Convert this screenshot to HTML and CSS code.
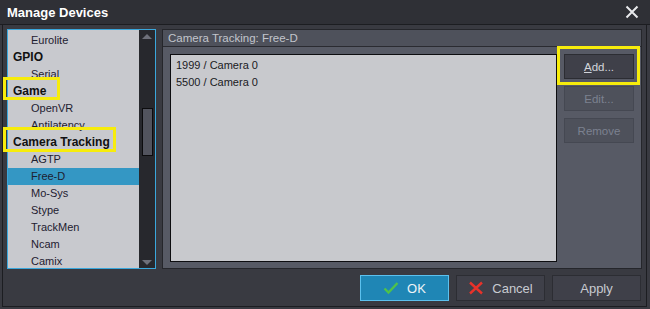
FILE: index.html
```html
<!DOCTYPE html>
<html lang="en">
<head>
    <meta charset="UTF-8">
    <title>Manage Devices</title>
    <link rel="stylesheet" href="styles.css">
</head>
<body>
    <div class="window">
        <div class="titlebar">
            <span class="title">Manage Devices</span>
            <svg class="close" width="14" height="14" viewBox="0 0 14 14">
                <path d="M1.5 1.5 L12.5 12.5 M12.5 1.5 L1.5 12.5" stroke="#e8e9ec" stroke-width="2"/>
            </svg>
        </div>

        <div class="content">
            <div class="main">
                <div class="devices">
                    <ul class="tree">
                        <li class="item">Eurolite</li>
                        <li class="group">GPIO</li>
                        <li class="item">Serial</li>
                        <li class="group">Game</li>
                        <li class="item">OpenVR</li>
                        <li class="item">Antilatency</li>
                        <li class="group">Camera Tracking</li>
                        <li class="item">AGTP</li>
                        <li class="item selected">Free-D</li>
                        <li class="item">Mo-Sys</li>
                        <li class="item">Stype</li>
                        <li class="item">TrackMen</li>
                        <li class="item">Ncam</li>
                        <li class="item">Camix</li>
                    </ul>
                    <div class="scrollbar">
                        <span class="arrow up"></span>
                        <div class="track"><div class="thumb"></div></div>
                        <span class="arrow down"></span>
                    </div>
                </div>

                <div class="panel">
                    <div class="panel-header">Camera Tracking: Free-D</div>
                    <div class="panel-body">
                        <ul class="entries">
                            <li>1999 / Camera 0</li>
                            <li>5500 / Camera 0</li>
                        </ul>
                        <div class="side-buttons">
                            <button class="btn"><span><u>A</u>dd...</span></button>
                            <button class="btn" disabled>Edit...</button>
                            <button class="btn" disabled>Remove</button>
                        </div>
                    </div>
                </div>
            </div>

            <div class="footer">
                <button class="btn big primary">
                    <svg width="16" height="14" viewBox="0 0 16 14">
                        <path d="M1.5 7.5 L5.5 11.5 L14.5 2" fill="none" stroke="#4fc24a" stroke-width="2.4"/>
                    </svg>
                    <span>OK</span>
                </button>
                <button class="btn big">
                    <svg width="16" height="14" viewBox="0 0 16 14">
                        <path d="M2 1.5 L14 12.5 M14 1.5 L2 12.5" stroke="#e8322a" stroke-width="2.4"/>
                    </svg>
                    <span>Cancel</span>
                </button>
                <button class="btn big">Apply</button>
            </div>
        </div>

        <!-- annotation boxes -->
        <div class="mark mark-game"></div>
        <div class="mark mark-tracking"></div>
        <div class="mark mark-add"></div>
    </div>
</body>
</html>
```

FILE: styles.css
```css
* {
    margin: 0;
    padding: 0;
    box-sizing: border-box;
}

body {
    background: #393a41;
    font-family: 'Liberation Sans', Arial, sans-serif;
    font-size: 11px;
    width: 650px;
    height: 309px;
    overflow: hidden;
}

.window {
    position: relative;
    width: 650px;
    height: 309px;
}

.titlebar {
    height: 25px;
    background: #2f3036;
    border-bottom: 1px solid #1c1d21;
    display: flex;
    align-items: center;
    justify-content: space-between;
    padding: 0 11px 0 7px;
}

.title {
    color: #ffffff;
    font-weight: bold;
    font-size: 13px;
}

.close {
    display: block;
}

.content {
    height: 282px;
    margin: 0 3px 0 2px;
    border: 1px solid #1c1d21;
    border-top: none;
    padding: 4px 4px 0 4px;
}

.main {
    display: flex;
    gap: 6px;
    height: 240px;
}

/* device tree */
.devices {
    width: 149px;
    border: 1px solid #3aa7dc;
    display: flex;
}

.tree {
    list-style: none;
    flex: 1;
    background: #c8c9ce;
    padding-top: 2px;
    overflow: hidden;
}

.tree li {
    height: 17px;
    line-height: 17px;
    white-space: nowrap;
}

.item {
    padding-left: 23px;
    color: #1e2030;
}

.group {
    padding-left: 5px;
    font-weight: bold;
    font-size: 12px;
    color: #111;
}

.selected {
    background: #3497c4;
}

.scrollbar {
    width: 16px;
    background: #27282d;
    display: flex;
    flex-direction: column;
    align-items: center;
    padding: 4px 0 3px;
}

.arrow {
    width: 0;
    height: 0;
    border-left: 5px solid transparent;
    border-right: 5px solid transparent;
}

.arrow.up {
    border-bottom: 5px solid #6e707a;
}

.arrow.down {
    border-top: 5px solid #6e707a;
}

.track {
    flex: 1;
    width: 100%;
    padding-top: 69px;
    display: flex;
    justify-content: center;
}

.thumb {
    width: 11px;
    height: 48px;
    background: #52545e;
    border: 1px solid #0c0c0e;
}

/* right panel */
.panel {
    flex: 1;
    border: 1px solid #25262b;
    background: #575a65;
    display: flex;
    flex-direction: column;
}

.panel-header {
    height: 17px;
    line-height: 16px;
    background: #4e515b;
    border-bottom: 1px solid #2a2b31;
    color: #c2c5cc;
    font-size: 11.5px;
    padding-left: 5px;
}

.panel-body {
    flex: 1;
    display: flex;
    padding: 7px 0 6px 7px;
}

.entries {
    list-style: none;
    flex: 1;
    background: #c8c9cd;
    border: 1px solid #0d0d10;
    padding: 2px 0 0 5px;
    color: #1a1a1e;
}

.entries li {
    height: 17px;
    line-height: 17px;
}

.side-buttons {
    width: 84px;
    display: flex;
    flex-direction: column;
    align-items: center;
    gap: 7px;
}

.btn {
    font-family: 'Liberation Sans', Arial, sans-serif;
    font-size: 11.5px;
    color: #d2d5db;
    background: #3f4049;
    border: 1px solid #2c2d33;
    width: 70px;
    height: 25px;
    display: flex;
    align-items: center;
    justify-content: center;
    gap: 8px;
}

.btn:disabled {
    color: #7c8190;
    background: #4e515b;
    border-color: #454852;
}

.footer {
    display: flex;
    justify-content: flex-end;
    gap: 7px;
    padding: 6px 1px 0 0;
}

.btn.big {
    width: 89px;
    height: 26px;
    font-size: 13px;
    color: #c8cbd1;
    border-color: #2c2d33;
}

.btn.primary {
    background: #1f86b5;
    border-color: #5cc1ee;
    color: #eef3f7;
}

/* yellow highlight annotations */
.mark {
    position: absolute;
    border: 3px solid #f7ec0c;
}

.mark-game {
    left: 3px;
    top: 77px;
    width: 57px;
    height: 23px;
}

.mark-tracking {
    left: 3px;
    top: 127px;
    width: 113px;
    height: 25px;
}

.mark-add {
    left: 557px;
    top: 46px;
    width: 83px;
    height: 39px;
}
```
